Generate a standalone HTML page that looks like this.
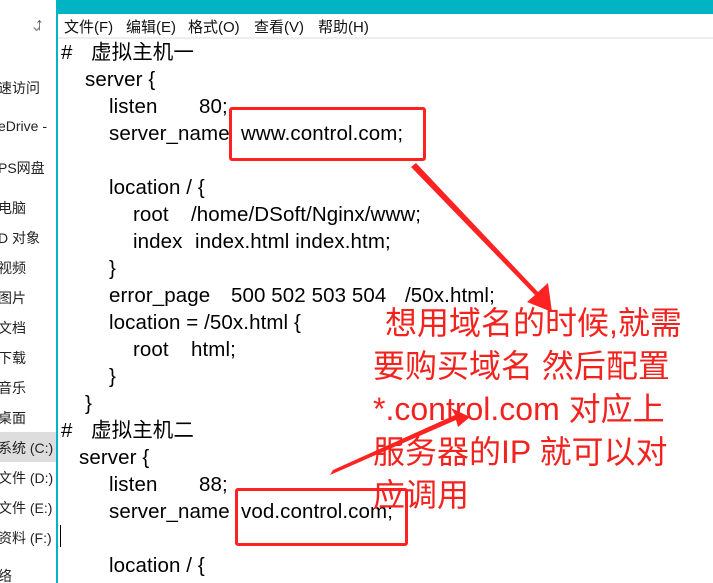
<!DOCTYPE html>
<html><head><meta charset="utf-8"><style>
body{margin:0;width:713px;height:583px;overflow:hidden;background:#fff;position:relative;font-family:"Liberation Sans","Noto Sans CJK SC",sans-serif;}
.side{position:absolute;left:0;top:0;width:56px;height:583px;background:#fff;overflow:hidden;}
.side div{position:absolute;left:-2px;font-size:14px;color:#222;white-space:nowrap;}
.edge{position:absolute;left:56px;top:0;width:2px;height:583px;background:#00b4c3;}
.title{position:absolute;left:56px;top:0;width:657px;height:14px;background:#00b4c3;}
.menu{position:absolute;left:58px;top:14px;width:655px;height:23px;border-bottom:2px solid #eee;font-size:15px;color:#111;}
.menu span{position:absolute;top:2px;}
.c{position:absolute;font-size:20.5px;letter-spacing:0.1px;color:#000;white-space:pre;line-height:27px;}
.box{position:absolute;border:3px solid #f22;border-radius:3px;}
.note{position:absolute;left:373px;top:302px;font-size:32px;line-height:43px;color:#f2231e;white-space:nowrap;}
</style></head><body>
<div class="side">
<div style="top:16px;left:30px;font-size:16px;color:#888">⌄</div>
<div style="top:14px;left:35px;font-size:18px;color:#555">↑</div>
<div style="top:78px">速访问</div>
<div style="top:118px">eDrive -</div>
<div style="top:158px">PS网盘</div>
<div style="top:198px">电脑</div>
<div style="top:228px">D 对象</div>
<div style="top:258px">视频</div>
<div style="top:288px">图片</div>
<div style="top:318px">文档</div>
<div style="top:348px">下载</div>
<div style="top:378px">音乐</div>
<div style="top:408px">桌面</div>
<div style="top:432px;left:0;width:56px;height:30px;background:#ddd"></div>
<div style="top:438px">系统 (C:)</div>
<div style="top:468px">文件 (D:)</div>
<div style="top:498px">文件 (E:)</div>
<div style="top:528px">资料 (F:)</div>
<div style="top:566px">络</div>
</div>
<div class="edge"></div>
<div class="title"></div>
<div class="menu"><span style="left:6px">文件(F)</span><span style="left:68px">编辑(E)</span><span style="left:130px">格式(O)</span><span style="left:196px">查看(V)</span><span style="left:260px">帮助(H)</span></div>

<div class="c" style="left:61px;top:39px">#</div><div class="c" style="left:91px;top:39px">虚拟主机一</div>
<div class="c" style="left:85px;top:66px">server {</div>
<div class="c" style="left:109px;top:93px">listen</div><div class="c" style="left:199px;top:93px">80;</div>
<div class="c" style="left:109px;top:120px">server_name</div><div class="c" style="left:241px;top:120px">www.control.com;</div>
<div class="c" style="left:109px;top:174px">location / {</div>
<div class="c" style="left:133px;top:201px">root</div><div class="c" style="left:191px;top:201px">/home/DSoft/Nginx/www;</div>
<div class="c" style="left:133px;top:228px">index</div><div class="c" style="left:195px;top:228px">index.html index.htm;</div>
<div class="c" style="left:109px;top:255px">}</div>
<div class="c" style="left:109px;top:282px">error_page</div><div class="c" style="left:231px;top:282px">500 502 503 504</div><div class="c" style="left:405px;top:282px">/50x.html;</div>
<div class="c" style="left:109px;top:309px">location = /50x.html {</div>
<div class="c" style="left:133px;top:336px">root</div><div class="c" style="left:191px;top:336px">html;</div>
<div class="c" style="left:109px;top:363px">}</div>
<div class="c" style="left:85px;top:390px">}</div>
<div class="c" style="left:61px;top:417px">#</div><div class="c" style="left:91px;top:417px">虚拟主机二</div>
<div class="c" style="left:79px;top:444px">server {</div>
<div class="c" style="left:109px;top:471px">listen</div><div class="c" style="left:199px;top:471px">88;</div>
<div class="c" style="left:109px;top:498px">server_name</div><div class="c" style="left:241px;top:498px">vod.control.com;</div>
<div class="c" style="left:109px;top:552px">location / {</div>

<div style="position:absolute;left:60px;top:525px;width:1px;height:22px;background:#000"></div>
<div class="box" style="left:229px;top:107px;width:191px;height:48px"></div>
<div class="box" style="left:235px;top:488px;width:167px;height:52px"></div>
<svg style="position:absolute;left:0;top:0" width="713" height="583">
<polygon points="411,167 416,163 538,292 548,283 552,312 527,302 535,295" fill="#f22"/>
<polygon points="330,475 333,470 455,415 451,408 470,417 458,427 456,420" fill="#f22"/>
</svg>
<div class="note"><span style="margin-left:12px">想用域名的时候,就需</span><br>要购买域名 然后配置<br>*.control.com 对应上<br>服务器的IP 就可以对<br>应调用</div>
</body></html>
